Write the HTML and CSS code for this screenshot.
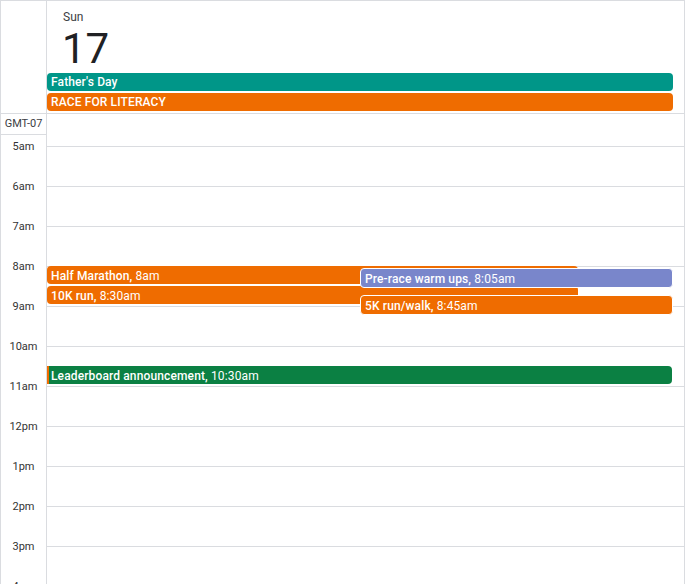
FILE: index.html
```html
<!DOCTYPE html>
<html lang="en">
<head>
<meta charset="utf-8">
<title>Calendar - Sun 17</title>
<link rel="stylesheet" href="styles.css">
</head>
<body>
<div class="cal">
  <div class="head">
    <div class="gutter"></div>
    <div class="day-head">
      <div class="dow">Sun</div>
      <div class="date">17</div>
      <div class="allday teal">Father's Day</div>
      <div class="allday orange">RACE FOR LITERACY</div>
    </div>
  </div>
  <div class="body">
    <div class="times">
      <div class="tz">GMT-07</div>
      <div class="hour first">5am</div>
      <div class="hour">6am</div>
      <div class="hour">7am</div>
      <div class="hour">8am</div>
      <div class="hour">9am</div>
      <div class="hour">10am</div>
      <div class="hour">11am</div>
      <div class="hour">12pm</div>
      <div class="hour">1pm</div>
      <div class="hour">2pm</div>
      <div class="hour">3pm</div>
      <div class="hour">4pm</div>
      <div class="hour">5pm</div>
    </div>
    <div class="day">
      <div class="slot first"></div>
      <div class="slot"></div>
      <div class="slot"></div>
      <div class="slot"></div>
      <div class="slot"></div>
      <div class="slot"></div>
      <div class="slot"></div>
      <div class="slot"></div>
      <div class="slot"></div>
      <div class="slot"></div>
      <div class="slot"></div>
      <div class="slot"></div>
      <div class="slot"></div>

      <div class="ev orange" style="top:152px;height:18px;left:0;width:531px"><span class="t">Half Marathon,</span> 8am</div>
      <div class="ev orange" style="top:172px;height:18px;left:0;width:531px"><span class="t">10K run,</span> 8:30am</div>
      <div class="ev lavender bordered" style="top:154px;height:20px;left:313px;width:313px"><span class="t">Pre-race warm ups,</span> 8:05am</div>
      <div class="ev orange bordered" style="top:181px;height:20px;left:313px;width:313px"><span class="t">5K run/walk,</span> 8:45am</div>
      <div class="ev green striped" style="top:252px;height:18px;left:0;width:625px"><span class="t">Leaderboard announcement,</span> 10:30am</div>
    </div>
  </div>
</div>
</body>
</html>
```

FILE: styles.css
```css
html, body {
  margin: 0;
  padding: 0;
  background: #fff;
  overflow: hidden;
}

body {
  font-family: Roboto, "Liberation Sans", Arial, sans-serif;
  color: #3c4043;
}

.cal {
  width: 685px;
  box-sizing: border-box;
  border: 1px solid #dadce0;
  border-bottom: none;
}

.head {
  display: flex;
  border-bottom: 1px solid #dadce0;
}

.gutter {
  width: 46px;
  flex: none;
  box-sizing: border-box;
  border-right: 1px solid #dadce0;
}

.day-head {
  flex: 1;
  padding: 8px 0 2px 0;
}

.dow {
  padding-left: 16px;
  font-size: 12px;
  line-height: 16px;
  color: #3c4043;
}

.date {
  padding-left: 15px;
  margin-top: 2px;
  font-size: 42px;
  line-height: 44px;
  color: #202124;
}

.allday {
  margin: 2px 11px 0 0;
  height: 18px;
  line-height: 18px;
  padding-left: 4px;
  border-radius: 4px;
  color: #fff;
  font-size: 12px;
  font-weight: 500;
  letter-spacing: 0.13px;
  white-space: nowrap;
  overflow: hidden;
}

.teal { background: #009688; }
.orange { background: #ef6c00; }
.lavender { background: #7986cb; }
.green { background: #0b8043; }

.body {
  display: flex;
}

.times {
  width: 46px;
  flex: none;
  box-sizing: border-box;
  border-right: 1px solid #dadce0;
}

.tz {
  height: 20px;
  line-height: 20px;
  border-bottom: 1px solid #dadce0;
  font-size: 11px;
  text-align: center;
  color: #3c4043;
}

.hour {
  height: 40px;
  line-height: 14px;
  font-size: 11px;
  text-align: center;
  color: #333;
}

.hour.first {
  margin-top: 5px;
}

.day {
  flex: 1;
  position: relative;
}

.slot {
  height: 40px;
  box-sizing: border-box;
  border-bottom: 1px solid #dadce0;
}

.slot.first {
  height: 33px;
}

.ev {
  position: absolute;
  box-sizing: border-box;
  padding: 2px 4px 0 4px;
  border-radius: 4px;
  color: #fff;
  font-size: 12px;
  line-height: 16px;
  letter-spacing: 0.13px;
  white-space: nowrap;
  overflow: hidden;
}

.ev .t {
  font-weight: 500;
}

.ev.bordered {
  border: 1px solid #fff;
  padding-top: 2px;
}

.ev.striped {
  background: linear-gradient(to right, #ef6c00 2px, #0b8043 2px);
  border-radius: 0 4px 4px 0;
}
```
